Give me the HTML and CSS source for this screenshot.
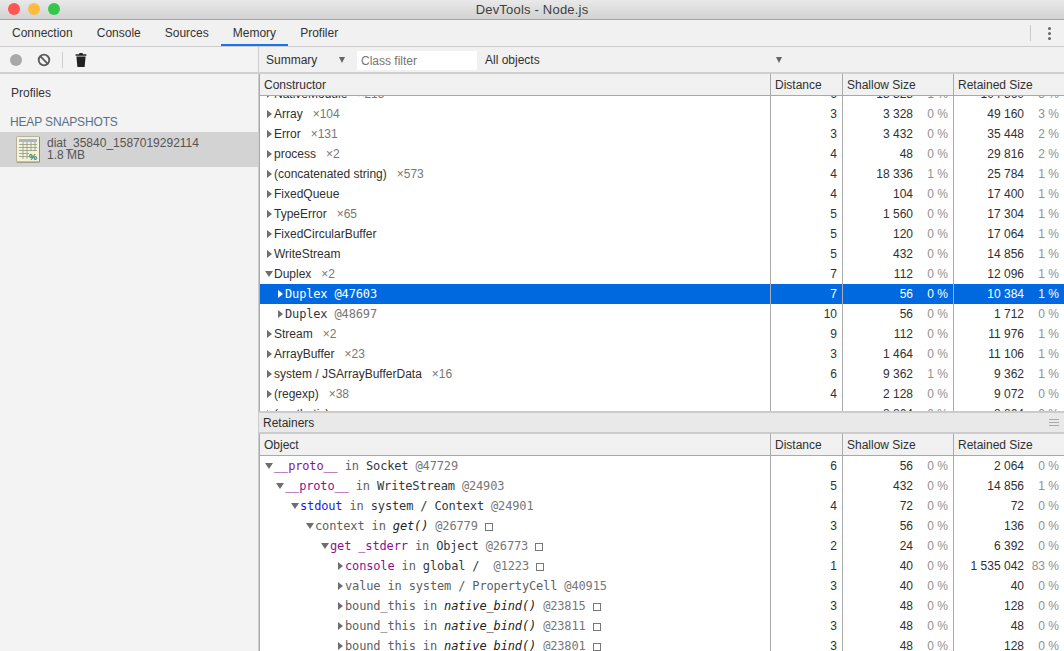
FILE: index.html
```html
<!DOCTYPE html>
<html lang="en">
<head>
<meta charset="utf-8">
<title>DevTools - Node.js</title>
<link rel="stylesheet" href="styles.css">
</head>
<body>
<div class="window">
  <header class="titlebar">
    <div class="lights"><i class="light red"></i><i class="light amber"></i><i class="light green"></i></div>
    <div class="title">DevTools - Node.js</div>
  </header>
  <nav class="tabs">
    <a class="tab">Connection</a><a class="tab">Console</a><a class="tab">Sources</a><a class="tab active">Memory</a><a class="tab">Profiler</a>
    <span class="spacer"></span>
    <span class="tabs-divider"></span>
    <span class="kebab"><i></i><i></i><i></i></span>
  </nav>
  <div class="main">
    <aside class="sidebar">
      <div class="side-tools">
        <span class="rec"></span>
        <svg class="block" width="14" height="14" viewBox="0 0 14 14"><circle cx="7" cy="7" r="5.3" fill="none" stroke="#5a5a5a" stroke-width="1.8"/><path d="M3.2 3.2l7.6 7.6" stroke="#5a5a5a" stroke-width="1.8"/></svg>
        <span class="side-divider"></span>
        <svg class="trash" width="12" height="14" viewBox="0 0 12 14"><path d="M4.5 0h3l.5 1.2h3.4v1.6H.6V1.2H4z" fill="#222"/><path d="M1.4 3.6h9.2L9.6 14H2.4z" fill="#222"/></svg>
      </div>
      <div class="profiles">Profiles</div>
      <div class="heap-title">HEAP SNAPSHOTS</div>
      <div class="snapshot">
        <svg class="snap-icon" width="24" height="27" viewBox="0 0 24 27">
          <rect x=".5" y=".5" width="23" height="26" rx="1" fill="#f3f1d8" stroke="#b5b39c"/>
          <path d="M1 26h22.500V1" fill="none" stroke="#8e8c78"/>
          <rect x="3" y="3" width="18" height="3" fill="#a9b4cf"/>
          <path d="M3 8.500h18M3 11.500h18M3 14.500h18M3 17.500h10M3 20.500h10M7 6v17M11 6v17M15 6v9M19 6v9" stroke="#8f9a80" stroke-width=".8" fill="none"/>
          <text x="13" y="24" class="snap-pct">%</text>
        </svg>
        <div class="snap-text"><div>diat_35840_1587019292114</div><div>1.8 MB</div></div>
      </div>
    </aside>
    <section class="content">
      <div class="filters">
        <span class="sel-summary">Summary</span><i class="caret caret-a"></i>
        <span class="class-filter">Class filter</span>
        <span class="sel-objects">All objects</span><i class="caret caret-b"></i>
      </div>
      <div class="grid-head">
        <div class="cell c1">Constructor</div><div class="cell hc">Distance</div><div class="cell hc">Shallow Size</div><div class="cell hc">Retained Size</div>
      </div>
      <div class="pane top-pane">
        <div class="rows top-rows">
          <div class="row"><div class="cell c1 l1"><i class="arrow"></i>NativeModule<span class="cnt">×215</span></div><div class="cell n">6</div><div class="cell n"><span>18 328</span><em>1 %</em></div><div class="cell n"><span>104 360</span><em>3 %</em></div></div>
          <div class="row"><div class="cell c1 l1"><i class="arrow"></i>Array<span class="cnt">×104</span></div><div class="cell n">3</div><div class="cell n"><span>3 328</span><em>0 %</em></div><div class="cell n"><span>49 160</span><em>3 %</em></div></div>
          <div class="row"><div class="cell c1 l1"><i class="arrow"></i>Error<span class="cnt">×131</span></div><div class="cell n">3</div><div class="cell n"><span>3 432</span><em>0 %</em></div><div class="cell n"><span>35 448</span><em>2 %</em></div></div>
          <div class="row"><div class="cell c1 l1"><i class="arrow"></i>process<span class="cnt">×2</span></div><div class="cell n">4</div><div class="cell n"><span>48</span><em>0 %</em></div><div class="cell n"><span>29 816</span><em>2 %</em></div></div>
          <div class="row"><div class="cell c1 l1"><i class="arrow"></i>(concatenated string)<span class="cnt">×573</span></div><div class="cell n">4</div><div class="cell n"><span>18 336</span><em>1 %</em></div><div class="cell n"><span>25 784</span><em>1 %</em></div></div>
          <div class="row"><div class="cell c1 l1"><i class="arrow"></i>FixedQueue</div><div class="cell n">4</div><div class="cell n"><span>104</span><em>0 %</em></div><div class="cell n"><span>17 400</span><em>1 %</em></div></div>
          <div class="row"><div class="cell c1 l1"><i class="arrow"></i>TypeError<span class="cnt">×65</span></div><div class="cell n">5</div><div class="cell n"><span>1 560</span><em>0 %</em></div><div class="cell n"><span>17 304</span><em>1 %</em></div></div>
          <div class="row"><div class="cell c1 l1"><i class="arrow"></i>FixedCircularBuffer</div><div class="cell n">5</div><div class="cell n"><span>120</span><em>0 %</em></div><div class="cell n"><span>17 064</span><em>1 %</em></div></div>
          <div class="row"><div class="cell c1 l1"><i class="arrow"></i>WriteStream</div><div class="cell n">5</div><div class="cell n"><span>432</span><em>0 %</em></div><div class="cell n"><span>14 856</span><em>1 %</em></div></div>
          <div class="row"><div class="cell c1 l1"><i class="arrow open"></i>Duplex<span class="cnt">×2</span></div><div class="cell n">7</div><div class="cell n"><span>112</span><em>0 %</em></div><div class="cell n"><span>12 096</span><em>1 %</em></div></div>
          <div class="row selected"><div class="cell c1 l2 mono"><i class="arrow"></i>Duplex <span class="id">@47603</span></div><div class="cell n">7</div><div class="cell n"><span>56</span><em>0 %</em></div><div class="cell n"><span>10 384</span><em>1 %</em></div></div>
          <div class="row"><div class="cell c1 l2 mono"><i class="arrow"></i>Duplex <span class="id">@48697</span></div><div class="cell n">10</div><div class="cell n"><span>56</span><em>0 %</em></div><div class="cell n"><span>1 712</span><em>0 %</em></div></div>
          <div class="row"><div class="cell c1 l1"><i class="arrow"></i>Stream<span class="cnt">×2</span></div><div class="cell n">9</div><div class="cell n"><span>112</span><em>0 %</em></div><div class="cell n"><span>11 976</span><em>1 %</em></div></div>
          <div class="row"><div class="cell c1 l1"><i class="arrow"></i>ArrayBuffer<span class="cnt">×23</span></div><div class="cell n">3</div><div class="cell n"><span>1 464</span><em>0 %</em></div><div class="cell n"><span>11 106</span><em>1 %</em></div></div>
          <div class="row"><div class="cell c1 l1"><i class="arrow"></i>system / JSArrayBufferData<span class="cnt">×16</span></div><div class="cell n">6</div><div class="cell n"><span>9 362</span><em>1 %</em></div><div class="cell n"><span>9 362</span><em>1 %</em></div></div>
          <div class="row"><div class="cell c1 l1"><i class="arrow"></i>(regexp)<span class="cnt">×38</span></div><div class="cell n">4</div><div class="cell n"><span>2 128</span><em>0 %</em></div><div class="cell n"><span>9 072</span><em>0 %</em></div></div>
          <div class="row"><div class="cell c1 l1"><i class="arrow"></i>(synthetic)</div><div class="cell n"></div><div class="cell n"><span>8 864</span><em>0 %</em></div><div class="cell n"><span>8 864</span><em>0 %</em></div></div>
        </div>
      </div>
      <div class="retainers-bar"><span>Retainers</span><span class="grip"><i></i><i></i><i></i></span></div>
      <div class="grid-head">
        <div class="cell c1">Object</div><div class="cell hc">Distance</div><div class="cell hc">Shallow Size</div><div class="cell hc">Retained Size</div>
      </div>
      <div class="pane bottom-pane">
        <div class="rows">
          <div class="row"><div class="cell c1 r1 mono"><i class="arrow open"></i><span class="purple">__proto__</span> <span class="gr">in</span> Socket <span class="id">@47729</span></div><div class="cell n">6</div><div class="cell n"><span>56</span><em>0 %</em></div><div class="cell n"><span>2 064</span><em>0 %</em></div></div>
          <div class="row"><div class="cell c1 r2 mono"><i class="arrow open"></i><span class="purple">__proto__</span> <span class="gr">in</span> WriteStream <span class="id">@24903</span></div><div class="cell n">5</div><div class="cell n"><span>432</span><em>0 %</em></div><div class="cell n"><span>14 856</span><em>1 %</em></div></div>
          <div class="row"><div class="cell c1 r3 mono"><i class="arrow open"></i><span class="blue">stdout</span> <span class="gr">in</span> system / Context <span class="id">@24901</span></div><div class="cell n">4</div><div class="cell n"><span>72</span><em>0 %</em></div><div class="cell n"><span>72</span><em>0 %</em></div></div>
          <div class="row"><div class="cell c1 r4 mono"><i class="arrow open"></i><span class="gr">context</span> <span class="gr">in</span> <b>get()</b> <span class="id">@26779</span> <i class="box"></i></div><div class="cell n">3</div><div class="cell n"><span>56</span><em>0 %</em></div><div class="cell n"><span>136</span><em>0 %</em></div></div>
          <div class="row"><div class="cell c1 r5 mono"><i class="arrow open"></i><span class="purple">get _stderr</span> <span class="gr">in</span> Object <span class="id">@26773</span> <i class="box"></i></div><div class="cell n">2</div><div class="cell n"><span>24</span><em>0 %</em></div><div class="cell n"><span>6 392</span><em>0 %</em></div></div>
          <div class="row"><div class="cell c1 r6 mono"><i class="arrow"></i><span class="purple">console</span> <span class="gr">in</span> global / &nbsp;<span class="id">@1223</span> <i class="box"></i></div><div class="cell n">1</div><div class="cell n"><span>40</span><em>0 %</em></div><div class="cell n"><span>1 535 042</span><em>83 %</em></div></div>
          <div class="row"><div class="cell c1 r6 mono"><i class="arrow"></i><span class="gr">value</span> <span class="gr">in</span> <span class="gr">system / PropertyCell</span> <span class="id">@40915</span></div><div class="cell n">3</div><div class="cell n"><span>40</span><em>0 %</em></div><div class="cell n"><span>40</span><em>0 %</em></div></div>
          <div class="row"><div class="cell c1 r6 mono"><i class="arrow"></i><span class="gr">bound_this</span> <span class="gr">in</span> <b>native_bind()</b> <span class="id">@23815</span> <i class="box"></i></div><div class="cell n">3</div><div class="cell n"><span>48</span><em>0 %</em></div><div class="cell n"><span>128</span><em>0 %</em></div></div>
          <div class="row"><div class="cell c1 r6 mono"><i class="arrow"></i><span class="gr">bound_this</span> <span class="gr">in</span> <b>native_bind()</b> <span class="id">@23811</span> <i class="box"></i></div><div class="cell n">3</div><div class="cell n"><span>48</span><em>0 %</em></div><div class="cell n"><span>48</span><em>0 %</em></div></div>
          <div class="row"><div class="cell c1 r6 mono"><i class="arrow"></i><span class="gr">bound_this</span> <span class="gr">in</span> <b>native_bind()</b> <span class="id">@23801</span> <i class="box"></i></div><div class="cell n">3</div><div class="cell n"><span>48</span><em>0 %</em></div><div class="cell n"><span>128</span><em>0 %</em></div></div>
        </div>
      </div>
    </section>
  </div>
</div>
</body>
</html>
```
FILE: styles.css
```css
* { box-sizing: border-box; }
html, body { margin: 0; height: 100%; overflow: hidden; background: #fff; }
body { font: 12px "Liberation Sans", Arial, sans-serif; color: #303030; }
.window { width: 1064px; height: 651px; display: flex; flex-direction: column; overflow: hidden; }

.titlebar { height: 20px; flex: none; display: flex; align-items: center; justify-content: center; background: linear-gradient(#e9e9e9, #d2d2d2); border-bottom: 1px solid #a6a6a6; position: relative; }
.lights { position: absolute; left: 8px; top: 3px; display: flex; gap: 8px; }
.light { width: 12px; height: 12px; border-radius: 50%; display: block; }
.red { background: #fc5753; }
.amber { background: #fdbc40; }
.green { background: #34c84a; }
.title { font-size: 13px; color: #404040; letter-spacing: .2px; margin-top: -1px; }

.tabs { height: 27px; flex: none; display: flex; align-items: stretch; background: #f1f1f1; border-bottom: 1px solid #cdcdcd; }
.tab { padding: 0 12px; line-height: 26px; height: 26px; color: #333; }
.tab.active { border-bottom: 2px solid #1a73e8; }
.spacer { flex: 1; }
.tabs-divider { width: 1px; height: 16px; background: #ccc; margin: 5px 0 0; }
.kebab { width: 33px; display: flex; flex-direction: column; align-items: center; justify-content: flex-start; gap: 2px; padding: 7px 0 0 3px; }
.kebab i { width: 3px; height: 3px; border-radius: 50%; background: #666; display: block; }

.main { flex: 1; display: flex; min-height: 0; }
.sidebar { width: 259px; flex: none; background: #f3f3f3; border-right: 1px solid #cdcdcd; display: flex; flex-direction: column; }
.side-tools { height: 27px; flex: none; display: flex; align-items: center; border-bottom: 2px solid #d0d0d0; padding-left: 10px; }
.rec { width: 12px; height: 12px; border-radius: 50%; background: #a8a8a8; }
.block { margin-left: 15px; }
.side-divider { width: 1px; height: 16px; background: #ccc; margin-left: 11px; }
.trash { margin-left: 12px; }
.profiles { margin: 12px 0 0 11px; height: 14px; line-height: 14px; color: #333; }
.heap-title { margin: 15px 0 0 10px; height: 14px; line-height: 14px; color: #5a7085; letter-spacing: -.15px; }
.snapshot { margin-top: 3px; height: 35px; background: #d3d3d3; display: flex; align-items: center; padding-left: 16px; gap: 7px; color: #555; }
.snap-icon { flex: none; }
.snap-pct { font: bold 9px "Liberation Sans", Arial, sans-serif; fill: #3c6e3c; }
.snap-text { line-height: 12px; margin-top: -2px; }

.content { flex: 1; min-width: 0; display: flex; flex-direction: column; background: #fff; }
.filters { height: 27px; flex: none; display: flex; align-items: center; background: #f1f1f1; border-bottom: 2px solid #cfcfcf; padding-top: 1px; }
.sel-summary { margin-left: 7px; width: 73px; }
.caret { width: 0; height: 0; border-left: 3.5px solid transparent; border-right: 3.5px solid transparent; border-top: 6px solid #666; display: block; }
.class-filter { margin-left: 12px; width: 120px; height: 19px; line-height: 20px; background: #fff; color: #757575; padding-left: 4px; }
.sel-objects { margin-left: 8px; width: 291px; }

.grid-head, .row { display: grid; grid-template-columns: 511px 72px 111px 111px; }
.grid-head { height: 22px; flex: none; background: #f1f1f1; border-bottom: 1px solid #a9a9a9; line-height: 22px; }
.cell { white-space: nowrap; overflow: hidden; }
.grid-head .c1 { padding-left: 4px; }
.c1 { border-left: 1px solid #aaa; }
.hc { border-left: 1px solid #aaa; padding-left: 4px; }

.pane { overflow: hidden; min-height: 0; }
.top-pane { height: 315px; flex: none; }
.top-rows { margin-top: -12px; }
.bottom-pane { flex: 1; }
.row { height: 20px; line-height: 20px; background: #fff; }
.n { border-left: 1px solid #aaa; display: flex; justify-content: flex-end; padding-right: 5px; }
.n em { font-style: normal; color: #909090; width: 35px; text-align: right; }

.l1 { padding-left: 14px; }
.l2 { padding-left: 25px; }
.r1 { padding-left: 14px; }
.r2 { padding-left: 25px; }
.r3 { padding-left: 40px; }
.r4 { padding-left: 55px; }
.r5 { padding-left: 70px; }
.r6 { padding-left: 85px; }
.arrow { display: inline-block; width: 0; height: 0; border-top: 4px solid transparent; border-bottom: 4px solid transparent; border-left: 5px solid #6e6e6e; margin-left: -7px; margin-right: 2px; vertical-align: 0; }
.arrow.open { border-left: 4px solid transparent; border-right: 4px solid transparent; border-top: 6px solid #6e6e6e; border-bottom: 0; margin-left: -9px; margin-right: 1px; vertical-align: 1px; }
.cnt { color: #777; margin-left: 10px; }
.mono { font-family: "DejaVu Sans Mono", monospace; font-size: 12px; letter-spacing: -.15px; color: #303942; }
.id { color: #777; }
.gr { color: #606060; }
.purple { color: #881391; }
.blue { color: #1a1ae0; }
.mono b { font-weight: normal; font-style: italic; color: #222; }
.box { display: inline-block; width: 8px; height: 8px; border: 1px solid #777; vertical-align: -1px; }

.selected, .selected .cell, .selected em, .selected .id { background: #0069e0; color: #fff; }
.selected .c1, .selected .n { border-left-color: #aab; }
.selected .arrow { border-left-color: #fff; }

.retainers-bar { height: 23px; flex: none; display: flex; align-items: center; justify-content: space-between; background: #e9e9e9; border-top: 2px solid #cbcbcb; border-bottom: 2px solid #cbcbcb; padding: 0 5px 0 4px; }
.grip { display: flex; flex-direction: column; gap: 2px; width: 10px; }
.grip i { height: 1px; background: #aaa; display: block; }
```
